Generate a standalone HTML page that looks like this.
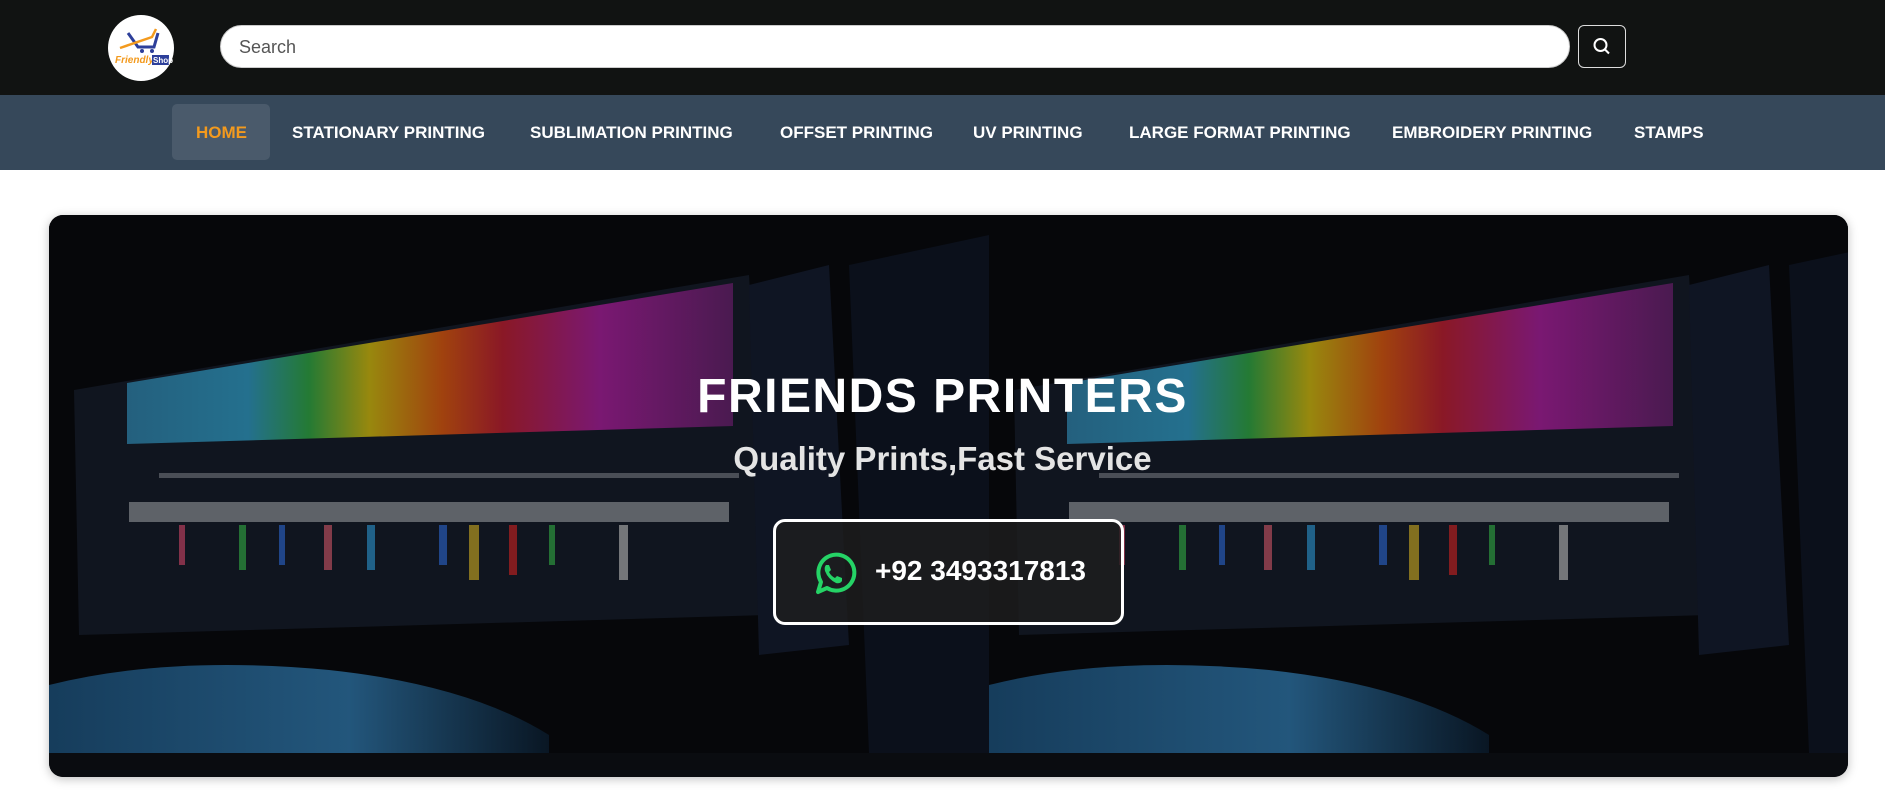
<!DOCTYPE html>
<html><head><meta charset="utf-8">
<style>
*{margin:0;padding:0;box-sizing:border-box}
body{width:1885px;height:805px;background:#fff;font-family:"Liberation Sans",sans-serif;overflow:hidden;position:relative}
.top{position:absolute;left:0;top:0;width:1885px;height:95px;background:#111312}
.logo{position:absolute;left:108px;top:15px;width:66px;height:66px;border-radius:50%;background:#fff}
.search{position:absolute;left:220px;top:25px;width:1350px;height:43px;border-radius:22px;background:#fff;border:1px solid #ccc;font-size:18px;color:#555;padding:11px 18px}
.sbtn{position:absolute;left:1578px;top:25px;width:48px;height:43px;border:1px solid #ddd;border-radius:6px}
.nav{position:absolute;left:0;top:95px;width:1885px;height:75px;background:#36485a}
.nav a{position:absolute;top:0;height:75px;line-height:75px;color:#fff;font-size:17px;font-weight:bold;text-decoration:none;white-space:nowrap}
.home{position:absolute;left:172px;top:9px;width:98px;height:56px;background:#4a5a6b;border-radius:5px}
.banner{position:absolute;left:49px;top:215px;width:1799px;height:562px;border-radius:14px;overflow:hidden;background:#050608;box-shadow:0 2px 10px rgba(0,0,0,.25)}
.h1{position:absolute;left:0;width:1885px;top:369px;text-align:center;color:#fff;font-size:48px;font-weight:bold;letter-spacing:1.5px}
.h2{position:absolute;left:0;width:1885px;top:440px;text-align:center;color:#e4e4e4;font-size:33px;font-weight:bold}
.btn{position:absolute;left:773px;top:519px;width:351px;height:106px;border:3px solid #fff;border-radius:12px;background:rgba(30,30,30,.8)}
.ph{position:absolute;left:875px;top:555px;color:#fff;font-size:28px;font-weight:bold}
</style></head><body>
<div class="top">
 <div class="logo"><svg width="66" height="66" viewBox="0 0 66 66">
  <path d="M20 18 L30 32 L46 32 L50 18" fill="none" stroke="#2d3f9a" stroke-width="3"/>
  <path d="M12 33 L44 22 L48 14" fill="none" stroke="#f39a1e" stroke-width="2.5"/>
  <circle cx="34" cy="36" r="2" fill="#2d3f9a"/><circle cx="44" cy="36" r="2" fill="#2d3f9a"/>
  <text x="7" y="48" font-size="10" font-weight="bold" fill="#f39a1e" font-family="Liberation Sans" font-style="italic">Friendly</text>
  <rect x="44" y="40" width="17" height="10" fill="#2d3f9a"/>
  <text x="45" y="48" font-size="8" font-weight="bold" fill="#fff" font-family="Liberation Sans">Shop</text>
 </svg></div>
 <div class="search">Search</div>
 <div class="sbtn"><svg width="46" height="41" viewBox="0 0 46 41"><circle cx="21.5" cy="19" r="6" fill="none" stroke="#fff" stroke-width="2"/><path d="M26 23.5 L30 27.5" stroke="#fff" stroke-width="2"/></svg></div>
</div>
<div class="nav">
 <div class="home"></div>
 <a style="left:196px;color:#f39a1e">HOME</a>
 <a style="left:292px">STATIONARY PRINTING</a>
 <a style="left:530px">SUBLIMATION PRINTING</a>
 <a style="left:780px">OFFSET PRINTING</a>
 <a style="left:973px">UV PRINTING</a>
 <a style="left:1129px">LARGE FORMAT PRINTING</a>
 <a style="left:1392px">EMBROIDERY PRINTING</a>
 <a style="left:1634px">STAMPS</a>
</div>
<div class="banner">
<svg width="1799" height="562" viewBox="0 0 1799 562">
 <defs>
  <linearGradient id="rb" x1="0" x2="1" y1="0" y2="0">
   <stop offset="0" stop-color="#24607e"/><stop offset=".2" stop-color="#24708e"/>
   <stop offset=".3" stop-color="#247a34"/><stop offset=".4" stop-color="#98880e"/>
   <stop offset=".52" stop-color="#a0420e"/><stop offset=".62" stop-color="#8a1826"/>
   <stop offset=".78" stop-color="#7a1872"/><stop offset="1" stop-color="#4a1a50"/>
  </linearGradient>
  <linearGradient id="fl" x1="0" x2="1"><stop offset="0" stop-color="#1a4a70"/><stop offset=".6" stop-color="#2a6a98"/><stop offset="1" stop-color="#0a1a2a"/></linearGradient>
  <g id="t">
   <rect width="940" height="538" fill="#06070a"/>
   <path d="M25 175 L700 60 L720 400 L30 420 Z" fill="#10151f"/>
   <path d="M78 168 L684 68 L684 211 L78 229 Z" fill="url(#rb)"/>
   <path d="M700 70 L780 50 L800 430 L710 440 Z" fill="#0f1523"/>
   <path d="M800 50 L940 20 L940 538 L820 538 Z" fill="#0b101b"/>
   <rect x="110" y="258" width="580" height="5" fill="#4a4e56"/>
   <rect x="80" y="287" width="600" height="20" fill="#5e6268"/>
   <g opacity=".65">
    <rect x="130" y="310" width="6" height="40" fill="#c04060"/><rect x="190" y="310" width="7" height="45" fill="#30a040"/>
    <rect x="230" y="310" width="6" height="40" fill="#2a60c0"/><rect x="275" y="310" width="8" height="45" fill="#c05060"/>
    <rect x="318" y="310" width="8" height="45" fill="#2a8ac0"/><rect x="390" y="310" width="8" height="40" fill="#2a60c0"/>
    <rect x="420" y="310" width="10" height="55" fill="#c0a020"/><rect x="460" y="310" width="8" height="50" fill="#c02020"/>
    <rect x="500" y="310" width="6" height="40" fill="#30a040"/><rect x="570" y="310" width="9" height="55" fill="#aaa"/>
   </g>
   <path d="M0 470 Q120 440 280 455 Q420 470 500 520 L500 538 L0 538 Z" fill="url(#fl)" opacity=".8"/>
  </g>
 </defs>
 <use href="#t" x="0" y="0"/>
 <use href="#t" x="940" y="0"/>
 <rect x="0" y="538" width="1799" height="24" fill="#0a0c10"/>
</svg>
</div>
<div class="h1">FRIENDS PRINTERS</div>
<div class="h2">Quality Prints,Fast Service</div>
<div class="btn"></div>
<svg style="position:absolute;left:809px;top:550px" width="48" height="48" viewBox="0 0 48 48">
 <path d="M9 42 L12 32 A18 18 0 1 1 18 38 Z" fill="none" stroke="#25d366" stroke-width="4" stroke-linejoin="round"/>
 <path d="M17 15 Q15 17 16 21 Q19 29 27 33 Q31 34 33 31 L33 28 L28 26 L26 28 Q22 26 20 22 L22 20 L20 15 Z" fill="#25d366"/>
</svg>
<div class="ph">+92 3493317813</div>
</body></html>
